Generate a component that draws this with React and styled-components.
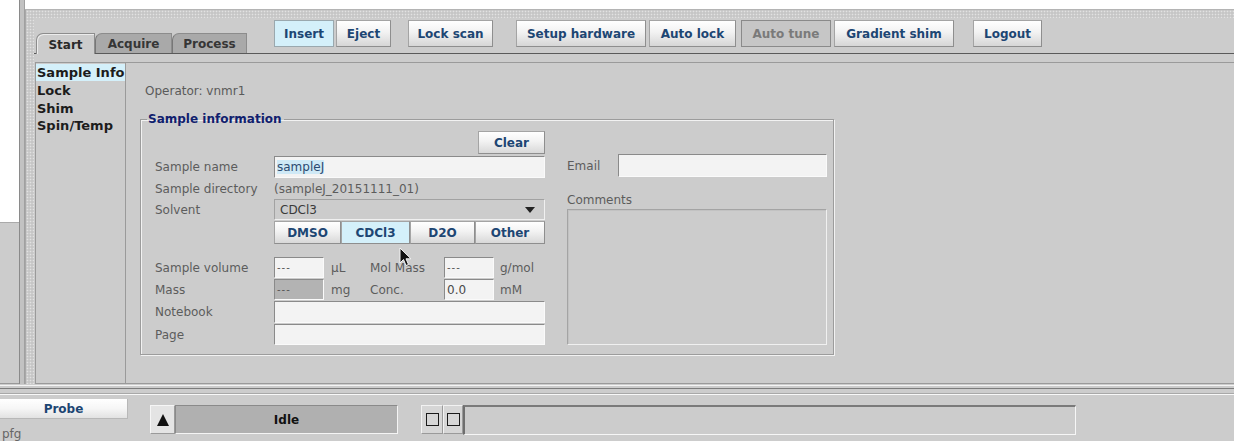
import React from "react";
import styled, { createGlobalStyle, css } from "styled-components";

const GlobalStyle = createGlobalStyle`
  html, body {
    margin: 0;
    padding: 0;
    background: #cccccc;
  }
  body {
    font-family: "DejaVu Sans", "Liberation Sans", sans-serif;
    font-size: 12px;
    overflow: hidden;
  }
`;

const Screen = styled.div`
  position: relative;
  width: 1234px;
  height: 441px;
  display: flex;
  flex-direction: column;
  background: #cccccc;
`;

const Workspace = styled.div`
  display: flex;
  height: 393px;
`;

const SideStrip = styled.div`
  width: 19px;
  display: flex;
  flex-direction: column;
  border-bottom: 1px solid #999;
  box-sizing: border-box;
`;

const SideWhite = styled.div`
  height: 222px;
  background: #ffffff;
  border-bottom: 1px solid #aaa;
`;

const Divider = styled.div`
  width: 6px;
  box-sizing: border-box;
  background: #c2c2c2;
  border-left: 1px solid #8a8a8a;
  border-right: 1px solid #a0a0a0;
`;

const Dock = styled.div`
  flex: 1;
  display: flex;
  flex-direction: column;
  min-width: 0;
`;

const TopWhite = styled.div`
  height: 9px;
  background: #ffffff;
  border-bottom: 1px solid #b4b4b4;
`;

const DottedFrame = styled.div`
  flex: 1;
  display: flex;
  flex-direction: column;
  padding: 8px 0 0 8px;
  background-color: #c6c6c6;
  background-image: radial-gradient(circle, #e2e2e2 0.7px, transparent 1.1px);
  background-size: 3px 3px;
  border-left: 1px solid #a8a8a8;
`;

const Content = styled.div`
  flex: 1;
  display: flex;
  flex-direction: column;
  background: #cccccc;
`;

const Toolbar = styled.div`
  display: flex;
  align-items: flex-start;
  height: 35px;
  border-bottom: 1px solid #5a5a5a;
  padding-left: 2px;
`;

const Tabs = styled.div`
  display: flex;
  align-self: flex-end;
  margin-bottom: -1px;
`;

const Tab = styled.div`
  height: 20px;
  box-sizing: border-box;
  display: flex;
  align-items: center;
  justify-content: center;
  padding-top: 1px;
  font-weight: bold;
  font-size: 12px;
  color: #2a2a2a;
  border: 1px solid #8c8c8c;
  border-bottom: none;
  border-top-left-radius: 7px;
  width: ${(p) => p.$w}px;
  background: ${(p) => (p.$active ? "#cccccc" : "#a9a9a9")};
  ${(p) =>
    p.$active
      ? css`
          height: 21px;
          box-shadow: inset 1px 1px 0 #ececec;
        `
      : css`
          color: #363636;
          border-left-color: #777;
        `}
`;

const ToolButton = styled.button`
  margin-top: 2px;
  margin-left: ${(p) => p.$gap || 0}px;
  width: ${(p) => p.$w}px;
  height: 27px;
  padding: 0;
  font-family: "DejaVu Sans", "Liberation Sans", sans-serif;
  font-weight: bold;
  font-size: 12px;
  color: #1d4673;
  border: 1px solid #a4a4a4;
  border-right-color: #8e8e8e;
  border-bottom-color: #8e8e8e;
  background: linear-gradient(#ffffff 0%, #f2f2f2 45%, #d6d6d6 100%);
  ${(p) =>
    p.$lit &&
    css`
      background: #d4f0fa;
      border-color: #9aa8ae;
    `}
  ${(p) =>
    p.$off &&
    css`
      background: #c6c6c6;
      color: #7a7a7a;
      border-color: #8a8a8a;
    `}
`;

const Gutter = styled.div`
  height: 8px;
`;

const TabPanel = styled.div`
  flex: 1;
  display: flex;
  margin-left: 1px;
  border-top: 1px solid #9a9a9a;
  border-left: 1px solid #9a9a9a;
  border-bottom: 1px solid #9a9a9a;
`;

const Nav = styled.div`
  width: 89px;
  border-right: 1px solid #9a9a9a;
  padding-top: 1px;
`;

const NavItem = styled.div`
  height: ${(p) => (p.$active ? 17 : 17.5)}px;
  line-height: 17px;
  padding-left: 1px;
  font-weight: bold;
  font-size: 13px;
  color: #1c1c1c;
  white-space: nowrap;
  background: ${(p) => (p.$active ? "#d4f0fa" : "transparent")};
  margin-bottom: ${(p) => (p.$active ? 1 : 0)}px;
`;

const Main = styled.div`
  flex: 1;
  padding: 21px 0 0 14px;
  color: #5a5a5a;
`;

const Operator = styled.div`
  height: 14px;
  line-height: 14px;
  padding-left: 5px;
  margin-bottom: 14px;
`;

const Group = styled.fieldset`
  width: 694px;
  box-sizing: border-box;
  margin: 0;
  padding: 5px 0 9px 14px;
  border: 1px solid #9c9c9c;
  box-shadow: inset 1px 1px 0 #f2f2f2, 1px 1px 0 #f2f2f2;
  display: flex;
  gap: 22px;
`;

const Legend = styled.legend`
  margin-left: -8px;
  padding: 0 2px 0 1px;
  font-weight: bold;
  font-size: 12px;
  line-height: 14px;
  color: #10206e;
`;

const FormColumn = styled.div`
  width: 390px;
  display: flex;
  flex-direction: column;
`;

const ClearRow = styled.div`
  display: flex;
  justify-content: flex-end;
  margin-bottom: 2px;
`;

const SmallButton = styled.button`
  width: ${(p) => p.$w}px;
  height: 23px;
  padding: 0;
  font-family: "DejaVu Sans", "Liberation Sans", sans-serif;
  font-weight: bold;
  font-size: 12px;
  color: #1d4673;
  border: 1px solid #a4a4a4;
  border-right-color: #8e8e8e;
  border-bottom-color: #8e8e8e;
  background: linear-gradient(#ffffff 0%, #f2f2f2 45%, #d8d8d8 100%);
  ${(p) =>
    p.$lit &&
    css`
      background: #d4f0fa;
    `}
`;

const Row = styled.div`
  display: grid;
  grid-template-columns: 119px 271px;
  align-items: center;
  height: ${(p) => p.$h}px;
  margin-bottom: ${(p) => p.$mb || 0}px;
`;

const Label = styled.span`
  white-space: nowrap;
  color: #5c5c5c;
`;

const Field = styled.div`
  height: ${(p) => p.$h || 21}px;
  width: ${(p) => (p.$w ? `${p.$w}px` : "auto")};
  box-sizing: border-box;
  display: flex;
  align-items: center;
  padding-left: 2px;
  color: #4a4a4a;
  background: ${(p) => p.$bg || "#f3f3f3"};
  border-top: 1px solid #8a8a8a;
  border-left: 1px solid #8a8a8a;
  border-right: 1px solid #fafafa;
  border-bottom: 1px solid #fafafa;
  white-space: nowrap;
`;

const Selected = styled.span`
  background: #cfe9f6;
  color: #2c4a70;
`;

const Combo = styled.div`
  height: 21px;
  box-sizing: border-box;
  display: flex;
  align-items: center;
  justify-content: space-between;
  padding: 0 9px 0 5px;
  color: #3a3a3a;
  border: 1px solid #a2a2a2;
  border-right-color: #f0f0f0;
  border-bottom-color: #f0f0f0;
`;

const ComboArrow = styled.span`
  width: 0;
  height: 0;
  border-left: 5px solid transparent;
  border-right: 5px solid transparent;
  border-top: 6px solid #222;
`;

const Segmented = styled.div`
  display: flex;
`;

const Spacer = styled.div`
  height: ${(p) => p.$h}px;
`;

const Measure = styled.div`
  display: grid;
  grid-template-columns: 50px 46px 74px 50px auto;
  align-items: center;
`;

const Unit = styled.span`
  padding-left: ${(p) => p.$pad || 7}px;
  color: #5c5c5c;
  white-space: nowrap;
`;

const Dashes = styled.span`
  color: #555;
  letter-spacing: 1px;
  font-size: 10px;
`;

const SideColumn = styled.div`
  width: 260px;
  padding-top: 23px;
  display: flex;
  flex-direction: column;
`;

const EmailRow = styled.div`
  display: flex;
  align-items: center;
`;

const EmailLabel = styled.span`
  width: 51px;
  color: #5c5c5c;
`;

const CommentsLabel = styled.div`
  height: 14px;
  line-height: 14px;
  margin: 16px 0 2px;
  color: #5c5c5c;
`;

const CommentsBox = styled.div`
  height: 136px;
  box-sizing: border-box;
  border: 1px solid #a4a4a4;
  border-right-color: #f0f0f0;
  border-bottom-color: #f0f0f0;
  box-shadow: inset 1px 1px 0 #c2c2c2;
`;

const Separator = styled.div`
  height: 11px;
  background: linear-gradient(
    #cccccc 0,
    #cccccc 1px,
    #f4f4f4 1px,
    #f4f4f4 2px,
    #cccccc 2px,
    #cccccc 4px,
    #7c7c7c 4px,
    #7c7c7c 5px,
    #cccccc 5px,
    #cccccc 9px,
    #a8a8a8 9px,
    #a8a8a8 10px,
    #f8f8f8 10px
  );
`;

const StatusBar = styled.div`
  flex: 1;
  display: flex;
  align-items: flex-start;
`;

const ProbeBlock = styled.div`
  width: 128px;
  display: flex;
  flex-direction: column;
  padding-top: 4px;
`;

const ProbeButton = styled.div`
  height: 19px;
  display: flex;
  align-items: center;
  justify-content: center;
  font-weight: bold;
  font-size: 12px;
  color: #1d4673;
  background: linear-gradient(#ffffff 0%, #f6f6f6 50%, #e2e2e2 100%);
  border-right: 1px solid #b8b8b8;
  border-bottom: 1px solid #b8b8b8;
`;

const HostName = styled.div`
  margin-top: 8px;
  padding-left: 2px;
  color: #666;
  font-size: 12px;
`;

const ArrowButton = styled.div`
  margin: 10px 0 0 22px;
  width: 25px;
  height: 29px;
  box-sizing: border-box;
  display: flex;
  align-items: center;
  justify-content: center;
  background: #e4e4e4;
  border: 1px solid #f6f6f6;
  border-right-color: #9a9a9a;
  border-bottom-color: #9a9a9a;
`;

const UpTriangle = styled.span`
  width: 0;
  height: 0;
  border-left: 6px solid transparent;
  border-right: 6px solid transparent;
  border-bottom: 12px solid #111;
`;

const StatusField = styled.div`
  margin-top: 10px;
  width: 223px;
  height: 29px;
  box-sizing: border-box;
  display: flex;
  align-items: center;
  justify-content: center;
  background: #b0b0b0;
  font-weight: bold;
  font-size: 12px;
  color: #111;
  border: 1px solid #8a8a8a;
  border-right-color: #f4f4f4;
  border-bottom-color: #f4f4f4;
`;

const ToggleCell = styled.div`
  margin-top: 10px;
  margin-left: ${(p) => p.$gap || 0}px;
  width: ${(p) => p.$w}px;
  height: 29px;
  box-sizing: border-box;
  display: flex;
  align-items: center;
  justify-content: center;
  background: #d6d6d6;
  border: 1px solid #f2f2f2;
  border-right-color: #9a9a9a;
  border-bottom-color: #9a9a9a;
`;

const ToggleBox = styled.span`
  width: 11px;
  height: 11px;
  border: 1px solid #1a1a1a;
`;

const MessageField = styled.div`
  margin-top: 10px;
  width: 613px;
  height: 30px;
  box-sizing: border-box;
  border: 1px solid #f6f6f6;
  border-top: 2px solid #7a7a7a;
  border-left: 2px solid #6e6e6e;
`;

const Pointer = styled.svg`
  position: absolute;
  left: 399px;
  top: 247px;
  pointer-events: none;
`;

const toolButtons = [
  { label: "Insert", w: 60, gap: 27, lit: true },
  { label: "Eject", w: 55, gap: 2 },
  { label: "Lock scan", w: 85, gap: 17 },
  { label: "Setup hardware", w: 130, gap: 23 },
  { label: "Auto lock", w: 87, gap: 3 },
  { label: "Auto tune", w: 90, gap: 5, off: true },
  { label: "Gradient shim", w: 120, gap: 3 },
  { label: "Logout", w: 69, gap: 19 },
];

const solvents = [
  { label: "DMSO", w: 67 },
  { label: "CDCl3", w: 69, lit: true },
  { label: "D2O", w: 65 },
  { label: "Other", w: 70 },
];

const navItems = ["Sample Info", "Lock", "Shim", "Spin/Temp"];

export default function App() {
  return (
    <>
      <GlobalStyle />
      <Screen>
        <Workspace>
          <SideStrip>
            <SideWhite />
          </SideStrip>
          <Divider />
          <Dock>
            <TopWhite />
            <DottedFrame>
              <Content>
                <Toolbar>
                  <Tabs>
                    <Tab $w={59} $active>
                      Start
                    </Tab>
                    <Tab $w={77}>Acquire</Tab>
                    <Tab $w={75}>Process</Tab>
                  </Tabs>
                  {toolButtons.map((b) => (
                    <ToolButton
                      key={b.label}
                      $w={b.w}
                      $gap={b.gap}
                      $lit={b.lit}
                      $off={b.off}
                    >
                      {b.label}
                    </ToolButton>
                  ))}
                </Toolbar>
                <Gutter />
                <TabPanel>
                  <Nav>
                    {navItems.map((item, i) => (
                      <NavItem key={item} $active={i === 0}>
                        {item}
                      </NavItem>
                    ))}
                  </Nav>
                  <Main>
                    <Operator>Operator: vnmr1</Operator>
                    <Group>
                      <Legend>Sample information</Legend>
                      <FormColumn>
                        <ClearRow>
                          <SmallButton $w={67}>Clear</SmallButton>
                        </ClearRow>
                        <Row $h={22}>
                          <Label>Sample name</Label>
                          <Field $h={22}>
                            <Selected>sampleJ</Selected>
                          </Field>
                        </Row>
                        <Row $h={21}>
                          <Label>Sample directory</Label>
                          <Label>(sampleJ_20151111_01)</Label>
                        </Row>
                        <Row $h={21} $mb={1}>
                          <Label>Solvent</Label>
                          <Combo>
                            CDCl3
                            <ComboArrow />
                          </Combo>
                        </Row>
                        <Row $h={23}>
                          <span />
                          <Segmented>
                            {solvents.map((s) => (
                              <SmallButton key={s.label} $w={s.w} $lit={s.lit}>
                                {s.label}
                              </SmallButton>
                            ))}
                          </Segmented>
                        </Row>
                        <Spacer $h={13} />
                        <Row $h={21} $mb={1}>
                          <Label>Sample volume</Label>
                          <Measure>
                            <Field $w={50}>
                              <Dashes>---</Dashes>
                            </Field>
                            <Unit>µL</Unit>
                            <Label>Mol Mass</Label>
                            <Field $w={50}>
                              <Dashes>---</Dashes>
                            </Field>
                            <Unit $pad={6}>g/mol</Unit>
                          </Measure>
                        </Row>
                        <Row $h={21} $mb={1}>
                          <Label>Mass</Label>
                          <Measure>
                            <Field $w={50} $bg="#b3b3b3">
                              <Dashes>---</Dashes>
                            </Field>
                            <Unit>mg</Unit>
                            <Label>Conc.</Label>
                            <Field $w={50}>0.0</Field>
                            <Unit $pad={6}>mM</Unit>
                          </Measure>
                        </Row>
                        <Row $h={22} $mb={1}>
                          <Label>Notebook</Label>
                          <Field $h={22} />
                        </Row>
                        <Row $h={21}>
                          <Label>Page</Label>
                          <Field />
                        </Row>
                      </FormColumn>
                      <SideColumn>
                        <EmailRow>
                          <EmailLabel>Email</EmailLabel>
                          <Field $w={209} $h={23} />
                        </EmailRow>
                        <CommentsLabel>Comments</CommentsLabel>
                        <CommentsBox />
                      </SideColumn>
                    </Group>
                  </Main>
                </TabPanel>
              </Content>
            </DottedFrame>
          </Dock>
        </Workspace>
        <Separator />
        <StatusBar>
          <ProbeBlock>
            <ProbeButton>Probe</ProbeButton>
            <HostName>pfg</HostName>
          </ProbeBlock>
          <ArrowButton>
            <UpTriangle />
          </ArrowButton>
          <StatusField>Idle</StatusField>
          <ToggleCell $w={22} $gap={23}>
            <ToggleBox />
          </ToggleCell>
          <ToggleCell $w={20}>
            <ToggleBox />
          </ToggleCell>
          <MessageField />
        </StatusBar>
        <Pointer width="13" height="20" viewBox="0 0 13 20">
          <path
            d="M1 1 L1 16 L4.5 12.5 L7 18.5 L9.5 17.5 L7 11.8 L12 11.8 Z"
            fill="#111"
            stroke="#f4f4f4"
            strokeWidth="1"
          />
        </Pointer>
      </Screen>
    </>
  );
}
